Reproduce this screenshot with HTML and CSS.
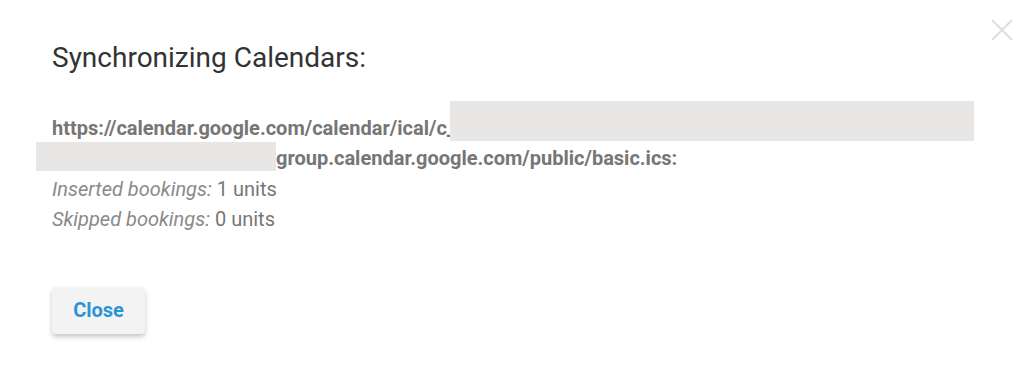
FILE: index.html
```html
<!DOCTYPE html>
<html>
<head>
<meta charset="utf-8">
<link rel="stylesheet" href="styles.css">
</head>
<body>
<div class="dialog">
  <button class="dismiss" aria-label="Close">
    <svg width="22" height="22" viewBox="0 0 22 22"><path d="M1 1L21 21M21 1L1 21" stroke="#dedede" stroke-width="2" fill="none"/></svg>
  </button>
  <h1 class="title">Synchronizing Calendars:</h1>
  <div class="result">
    <div class="url">https://calendar.google.com/calendar/ical/c_<br><span class="pad"></span>group.calendar.google.com/public/basic.ics:</div>
    <div class="redact r1"></div>
    <div class="redact r2"></div>
    <div class="stat"><em>Inserted bookings:</em> 1 units</div>
    <div class="stat"><em>Skipped bookings:</em> 0 units</div>
  </div>
  <button class="close-btn">Close</button>
</div>
</body>
</html>
```

FILE: styles.css
```css
html, body {
  margin: 0;
  background: #ffffff;
  font-family: Roboto, "Liberation Sans", sans-serif;
}
.dialog {
  position: relative;
  width: 1024px;
  height: 388px;
  box-sizing: border-box;
  padding: 42px 52px 0 52px;
  display: flex;
  flex-direction: column;
  align-items: flex-start;
}
.dismiss {
  position: absolute;
  top: 19px;
  right: 11px;
  padding: 0;
  border: 0;
  background: none;
  width: 22px;
  height: 22px;
}
.dismiss svg { display: block; }
.title {
  margin: 0;
  font-size: 28px;
  line-height: 32px;
  font-weight: 400;
  color: #333333;
}
.result {
  position: relative;
  margin-top: 39px;
  font-size: 20px;
  line-height: 30.4px;
  color: #777777;
}
.url {
  font-weight: 700;
  color: #767676;
  white-space: nowrap;
}
.pad {
  display: inline-block;
  width: 224px;
}
.redact {
  position: absolute;
  background: #e9e7e6;
}
.r1 {
  left: 398px;
  top: -12px;
  width: 524px;
  height: 40px;
}
.r2 {
  left: -16px;
  top: 29px;
  width: 240px;
  height: 29px;
}
.stat em {
  font-style: italic;
  color: #8a8a8a;
}
.close-btn {
  margin-top: 52px;
  width: 93px;
  height: 47px;
  border: 0;
  border-radius: 4px;
  background: #f3f3f3;
  box-shadow: 0 3px 5px rgba(0,0,0,0.22);
  color: #2b95d3;
  font-family: Roboto, "Liberation Sans", sans-serif;
  font-size: 20px;
  font-weight: 700;
  padding: 0;
}
```
